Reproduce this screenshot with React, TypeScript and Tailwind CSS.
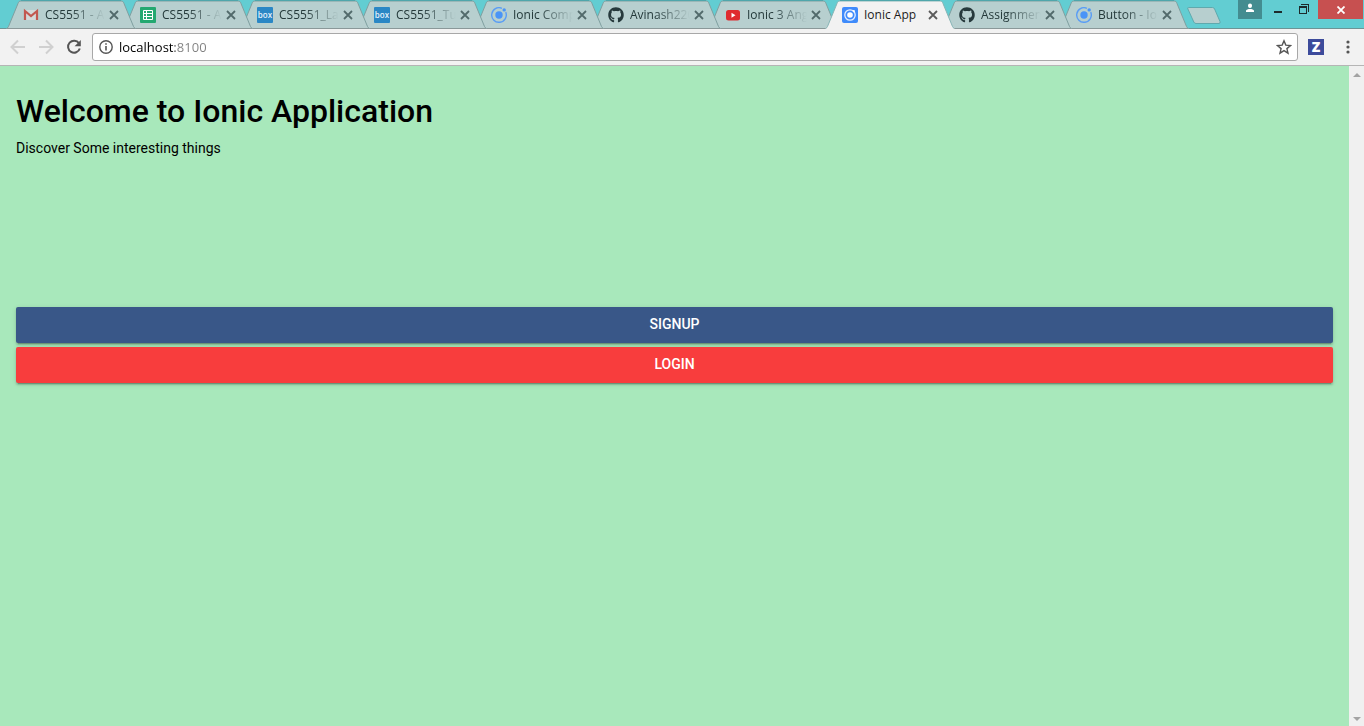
import React from "react";
import { FaGithub } from "react-icons/fa";

function GmailIcon() {
  return (
    <svg viewBox="0 0 16 16" className="size-4" aria-hidden="true">
      <path d="M2 3h12v10H2z" fill="#d3dada" />
      <path d="M2 13V4l6 5 6-5v9" fill="none" stroke="#c25850" strokeWidth="2.200" />
    </svg>
  );
}

function SheetIcon() {
  return (
    <svg viewBox="0 0 16 16" className="size-4" aria-hidden="true">
      <rect width="16" height="16" rx="1" fill="#23a870" />
      <path d="M3.500 3.500h9v9h-9zM3.500 6.500h9M3.500 9.500h9M6.500 3.500v9" fill="none" stroke="#fff" />
    </svg>
  );
}

function BoxIcon() {
  return (
    <span className="flex size-4 items-center justify-center rounded-[1px] bg-[#2a87c5] font-['Open_Sans',sans-serif] text-[8px] leading-none font-semibold text-[#e4f1fa]">
      box
    </span>
  );
}

function IonicIcon() {
  return (
    <svg viewBox="0 0 16 16" className="size-4" aria-hidden="true">
      <path d="M10.900 1.300A7.300 7.300 0 1 0 14.700 5.100" fill="none" stroke="#5a9df5" strokeWidth="1.400" />
      <circle cx="8" cy="8" r="3.700" fill="#4a94f7" />
      <circle cx="13.200" cy="2.900" r="1.700" fill="#4a94f7" />
    </svg>
  );
}

function IonicAppIcon() {
  return (
    <svg viewBox="0 0 16 16" className="size-4" aria-hidden="true">
      <rect width="16" height="16" rx="2" fill="#3f8bfb" />
      <circle cx="8" cy="8" r="5.200" fill="none" stroke="#e6f0ff" strokeWidth="1.300" />
      <circle cx="8" cy="8" r="2.800" fill="#fff" />
      <circle cx="11.800" cy="4.200" r="1.100" fill="#fff" />
    </svg>
  );
}

function YoutubeIcon() {
  return (
    <svg viewBox="0 0 16 16" className="size-4" aria-hidden="true">
      <rect x="1" y="3" width="14" height="10.500" rx="2.500" fill="#df2b2f" />
      <path d="M6.500 5.800v5l4-2.500z" fill="#fff" />
    </svg>
  );
}

function GithubIcon() {
  return <FaGithub className="size-4 text-[#26393c]" aria-hidden="true" />;
}

type Tab = { title: string; icon: React.ReactNode; active?: boolean; layer: string };

const tabs: Tab[] = [
  { title: "CS5551 - A", icon: <GmailIcon />, layer: "z-10" },
  { title: "CS5551 - A", icon: <SheetIcon />, layer: "z-9" },
  { title: "CS5551_La", icon: <BoxIcon />, layer: "z-8" },
  { title: "CS5551_Tu", icon: <BoxIcon />, layer: "z-7" },
  { title: "Ionic Comp", icon: <IonicIcon />, layer: "z-6" },
  { title: "Avinash220", icon: <GithubIcon />, layer: "z-5" },
  { title: "Ionic 3 Ang", icon: <YoutubeIcon />, layer: "z-4" },
  { title: "Ionic App", icon: <IonicAppIcon />, active: true, layer: "z-20" },
  { title: "Assignmen", icon: <GithubIcon />, layer: "z-3" },
  { title: "Button - Io", icon: <IonicIcon />, layer: "z-2" },
];

function BrowserTab({ title, icon, active, layer }: Tab) {
  return (
    <li className={`relative -mr-[13px] h-[29px] w-[130px] shrink-0 ${layer}`}>
      <svg viewBox="0 0 130 29" className="absolute inset-0 size-full" aria-hidden="true">
        <path
          d="M0 29C1.500 28.500 2 27.500 2.500 26.500L12 3.500C12.700 1.500 13.500 1 15 1H115C116.500 1 117.300 1.500 118 3.500L127.500 26.500C128 27.500 128.500 28.500 130 29z"
          fill={active ? "#f2f2f2" : "#b7cfcf"}
        />
        <path
          d="M.5 28.500C1.500 28 2 27.500 2.500 26.500L12 3.500C12.700 1.500 13.500 1 15 1H115C116.500 1 117.300 1.500 118 3.500L127.500 26.500C128 27.500 128.500 28 129.500 28.500"
          fill="none"
          stroke={active ? "#87b5b6" : "#7f9fa0"}
        />
        <path d="M15 .5H115" stroke="#4fa6ab" />
        {!active && <path d="M1 28.500H129" stroke="#8a9899" />}
      </svg>
      <div className="relative flex h-full items-center pl-[17px]">
        <button
          type="button"
          aria-current={active ? "page" : undefined}
          className="flex items-center gap-[6px] text-left"
        >
          {icon}
          <span
            className={`w-[63px] overflow-hidden whitespace-nowrap ${
              active ? "text-[#1c1c1c]" : "text-[#24393a] mask-r-from-40% mask-r-to-95%"
            }`}
          >
            {title}
          </span>
        </button>
        <button type="button" aria-label={`Close ${title}`} className="ml-px">
          <svg viewBox="0 0 10 10" className="size-[10px]" aria-hidden="true">
            <path d="M1 1l8 8M9 1L1 9" stroke={active ? "#5a5a5a" : "#526a6b"} strokeWidth="1.800" />
          </svg>
        </button>
      </div>
    </li>
  );
}

function WindowControls() {
  return (
    <div className="ml-auto flex h-[19px] items-stretch pr-px">
      <button type="button" aria-label="Profile" className="flex w-6 justify-center bg-[#438c90] pt-[3px]">
        <svg viewBox="0 0 10 10" className="size-[10px]" aria-hidden="true">
          <path d="M3 2.500a2 2 0 0 1 4 0v.5a2 2 0 0 1-4 0zM1 9V7.800C1 6.500 3.300 6 5 6s4 .5 4 1.800V9z" fill="#fff" />
        </svg>
      </button>
      <button type="button" aria-label="Minimize" className="flex w-8 justify-center pt-[11px]">
        <span className="h-[2px] w-2 bg-[#1d2b2c]" />
      </button>
      <button type="button" aria-label="Restore" className="flex w-6 justify-start pt-1 pl-[5px]">
        <svg viewBox="0 0 10 10" className="size-[10px]" shapeRendering="crispEdges" aria-hidden="true">
          <path d="M0 2h8v8H0zM1 4v5h6V4z" fill="#1d2b2c" fillRule="evenodd" />
          <path d="M2 .5h7.500V8" fill="none" stroke="#1d2b2c" />
        </svg>
      </button>
      <button type="button" aria-label="Close window" className="flex w-[45px] items-center justify-center bg-[#c75050]">
        <svg viewBox="0 0 8 8" className="size-2" aria-hidden="true">
          <path d="M.5.5l7 7M7.500.5l-7 7" stroke="#fff" strokeWidth="1.800" />
        </svg>
      </button>
    </div>
  );
}

function TabStrip() {
  return (
    <header className="flex h-[29px] border-b border-[#6d9496] bg-[#62cdd2] pl-[6px] text-[12px] leading-4">
      <ul className="flex">
        {tabs.map((tab, i) => (
          <BrowserTab key={i} {...tab} />
        ))}
      </ul>
      <button type="button" aria-label="New tab" className="ml-[11px] h-[17px] self-center pt-px">
        <svg viewBox="0 0 34 17" className="h-[17px] w-[34px]" aria-hidden="true">
          <path
            d="M1.500 .5H25.500Q27 .5 27.600 2L33 14.500Q33.600 16.500 32 16.500H9Q7.500 16.500 6.800 15L.9 2Q.2.5 1.500.5z"
            fill="#b7cfcf"
            stroke="#5fa9ad"
          />
        </svg>
      </button>
      <WindowControls />
    </header>
  );
}

function Toolbar() {
  return (
    <div className="flex h-[37px] items-center border-b border-[#b5b5b5] bg-[#f2f2f2] pr-[14px] pl-[10px]">
      <nav className="flex gap-3" aria-label="History">
        <button type="button" aria-label="Back">
          <svg viewBox="0 0 16 16" className="size-4" aria-hidden="true">
            <path d="M15 8H2M8 1.500L1.500 8 8 14.500" fill="none" stroke="#d0d0d0" strokeWidth="2" />
          </svg>
        </button>
        <button type="button" aria-label="Forward">
          <svg viewBox="0 0 16 16" className="size-4" aria-hidden="true">
            <path d="M1 8h13M8 1.500L14.500 8 8 14.500" fill="none" stroke="#d0d0d0" strokeWidth="2" />
          </svg>
        </button>
        <button type="button" aria-label="Reload">
          <svg viewBox="0 0 16 16" className="size-4" aria-hidden="true">
            <path d="M13 4.300A6 6 0 1 0 13.800 9.500" fill="none" stroke="#555" strokeWidth="2" />
            <path d="M14.800 1v6.200H8.600z" fill="#555" />
          </svg>
        </button>
      </nav>
      <div className="ml-[10px] flex h-7 flex-1 items-center rounded-[3px] border border-[#a8a8a8] bg-white pr-[5px] pl-[6px]">
        <svg viewBox="0 0 14 14" className="size-[14px]" aria-hidden="true">
          <circle cx="7" cy="7" r="6.200" fill="none" stroke="#555" strokeWidth="1.400" />
          <path d="M7 6v4.500M7 3.300v1.500" stroke="#555" strokeWidth="1.600" />
        </svg>
        <input
          type="text"
          aria-label="Address"
          defaultValue="localhost:8100"
          className="ml-[6px] min-w-0 flex-1 bg-linear-to-r from-black from-[56px] to-[#808080] to-[56px] bg-clip-text text-[13px] leading-5 text-transparent outline-none"
        />
        <button type="button" aria-label="Bookmark this page">
          <svg viewBox="0 0 16 16" className="size-4" aria-hidden="true">
            <path
              d="M8 1.800l1.800 4.300 4.700.4-3.600 3.100 1.100 4.600L8 11.700l-4 2.500 1.100-4.600L1.500 6.500l4.700-.4z"
              fill="none"
              stroke="#555"
              strokeWidth="1.400"
            />
          </svg>
        </button>
      </div>
      <button
        type="button"
        aria-label="Z extension"
        className="ml-[10px] flex size-4 items-center justify-center bg-[#3d4b9b] text-[14px] leading-none font-extrabold text-white"
      >
        Z
      </button>
      <button type="button" aria-label="Menu" className="ml-[22px]">
        <svg viewBox="0 0 4 14" className="h-[14px] w-1" fill="#555" aria-hidden="true">
          <circle cx="2" cy="2" r="1.600" />
          <circle cx="2" cy="7" r="1.600" />
          <circle cx="2" cy="12" r="1.600" />
        </svg>
      </button>
    </div>
  );
}

function ScrollTrack() {
  return (
    <div className="flex w-[15px] shrink-0 flex-col items-center justify-between bg-[#f0f0f0] pt-[7px] pb-[5px] pl-px" aria-hidden="true">
      <svg viewBox="0 0 8 4" className="h-1 w-2" fill="#a3a3a3">
        <path d="M4 0l4 4H0z" />
      </svg>
      <svg viewBox="0 0 8 4" className="h-1 w-2" fill="#a3a3a3">
        <path d="M4 4L0 0h8z" />
      </svg>
    </div>
  );
}

const actionClass =
  "h-9 w-full rounded-[2px] pb-[2px] text-[14px] font-medium text-white shadow-[0_2px_2px_0_rgba(0,0,0,0.14),0_3px_1px_-2px_rgba(0,0,0,0.2),0_1px_5px_0_rgba(0,0,0,0.12)]";

export default function App() {
  return (
    <div className="flex h-screen flex-col overflow-hidden font-['Open_Sans','Noto_Sans',sans-serif]">
      <TabStrip />
      <Toolbar />
      <div className="flex min-h-0 flex-1">
        <main className="flex-1 bg-[#a8e8bb] px-4 pt-6 font-[Roboto,sans-serif] text-black">
          <h1 className="text-[32px] leading-[42px] font-medium">Welcome to Ionic Application</h1>
          <p className="mt-[6px] text-[14px] leading-5">Discover Some interesting things</p>
          <div className="mt-[149px] flex flex-col gap-1">
            <button type="button" className={`${actionClass} bg-[#395788]`}>
              SIGNUP
            </button>
            <button type="button" className={`${actionClass} bg-[#f83d3d]`}>
              LOGIN
            </button>
          </div>
        </main>
        <ScrollTrack />
      </div>
    </div>
  );
}
